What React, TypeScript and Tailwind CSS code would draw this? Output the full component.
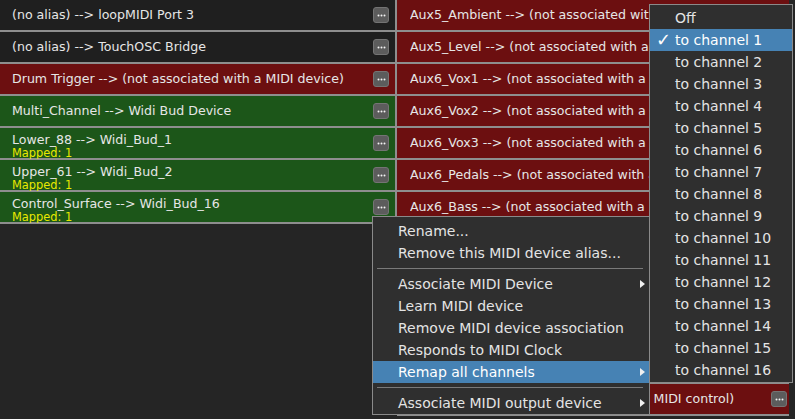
import React from "react";

type Tone = "dark" | "red" | "green";
type Row = { label: string; tone: Tone; mapped?: string };

const toneBg: Record<Tone, string> = {
  dark: "bg-[#1f1f1f]",
  red: "bg-[#6c0f10]",
  green: "bg-[#1c5619]",
};

const leftRows: Row[] = [
  { label: "(no alias) --> loopMIDI Port 3", tone: "dark" },
  { label: "(no alias) --> TouchOSC Bridge", tone: "dark" },
  { label: "Drum Trigger --> (not associated with a MIDI device)", tone: "red" },
  { label: "Multi_Channel --> Widi Bud Device", tone: "green" },
  { label: "Lower_88 --> Widi_Bud_1", tone: "green", mapped: "Mapped: 1" },
  { label: "Upper_61 --> Widi_Bud_2", tone: "green", mapped: "Mapped: 1" },
  { label: "Control_Surface --> Widi_Bud_16", tone: "green", mapped: "Mapped: 1" },
];

const rightRows: Row[] = [
  { label: "Aux5_Ambient --> (not associated with a MIDI device)", tone: "red" },
  { label: "Aux5_Level --> (not associated with a MIDI device)", tone: "red" },
  { label: "Aux6_Vox1 --> (not associated with a MIDI device)", tone: "red" },
  { label: "Aux6_Vox2 --> (not associated with a MIDI device)", tone: "red" },
  { label: "Aux6_Vox3 --> (not associated with a MIDI device)", tone: "red" },
  { label: "Aux6_Pedals --> (not associated with a MIDI device)", tone: "red" },
  { label: "Aux6_Bass --> (not associated with a MIDI device)", tone: "red" },
  { label: "Aux6_Keys --> (not associated with a MIDI device)", tone: "red" },
  { label: "Aux7_Vox1 --> (not associated with a MIDI device)", tone: "red" },
  { label: "Aux7_Vox2 --> (not associated with a MIDI device)", tone: "red" },
  { label: "Aux7_Pedals --> (not associated with a MIDI device)", tone: "red" },
  { label: "Aux7_Bass --> (not associated with a MIDI device)", tone: "red" },
  { label: "Aux7_Clock --> (not associated with a MIDI control)", tone: "red" },
];

type MenuEntry = { label: string; sub?: boolean; active?: boolean } | "sep";

const contextMenu: MenuEntry[] = [
  { label: "Rename..." },
  { label: "Remove this MIDI device alias..." },
  "sep",
  { label: "Associate MIDI Device", sub: true },
  { label: "Learn MIDI device" },
  { label: "Remove MIDI device association" },
  { label: "Responds to MIDI Clock" },
  { label: "Remap all channels", sub: true, active: true },
  "sep",
  { label: "Associate MIDI output device", sub: true },
];

const channels = ["Off", ...Array.from({ length: 16 }, (_, i) => `to channel ${i + 1}`)];

function DotsButton() {
  return (
    <div className="w-4 h-4 shrink-0 rounded-[3px] bg-[#5c5c5c] border border-[#747474] flex items-center justify-center">
      <svg width="9" height="3" viewBox="0 0 9 3">
        <circle cx="1.5" cy="1.5" r="1" fill="#f4f4f4" />
        <circle cx="4.5" cy="1.5" r="1" fill="#f4f4f4" />
        <circle cx="7.5" cy="1.5" r="1" fill="#f4f4f4" />
      </svg>
    </div>
  );
}

function Arrow() {
  return (
    <svg width="5" height="8" viewBox="0 0 5 8" className="shrink-0">
      <path d="M0 0 L5 4 L0 8 Z" fill="#f0f0f0" />
    </svg>
  );
}

function Cell({ row, side }: { row: Row; side: "left" | "right" }) {
  const pad = side === "left" ? "pl-3 pr-[6px] border-r-2" : "pl-[13px] pr-[2px]";
  return (
    <div className={`h-8 shrink-0 flex items-center border-b-2 border-[#8e8e8e] ${pad} ${toneBg[row.tone]}`}>
      {row.mapped ? (
        <div className="flex-1 min-w-0 self-start pt-[4px] flex flex-col overflow-hidden whitespace-nowrap">
          <span className="text-[12.6px] leading-[15px] text-[#e6e6e6]">{row.label}</span>
          <span className="text-[11.4px] leading-[12px] text-[#e8e800]">{row.mapped}</span>
        </div>
      ) : (
        <div className="flex-1 min-w-0 overflow-hidden whitespace-nowrap text-[12.6px] text-[#e6e6e6]">
          {row.label}
        </div>
      )}
      <DotsButton />
    </div>
  );
}

export default function App() {
  return (
    <div className="relative w-[795px] h-[419px] overflow-hidden bg-[#252525] font-['DejaVu_Sans',sans-serif] flex">
      <div className="w-[397px] flex flex-col">
        {leftRows.map((r) => (
          <Cell key={r.label} row={r} side="left" />
        ))}
      </div>
      <div className="w-[392px] flex flex-col">
        {rightRows.map((r) => (
          <Cell key={r.label} row={r} side="right" />
        ))}
      </div>

      {/* context menu */}
      <div className="absolute left-[372px] top-[216px] w-[278px] bg-[#2f2f2f] border border-[#8a8a8a] pt-[3px] text-[14px] text-[#e4e4e4]">
        {contextMenu.map((m, i) =>
          m === "sep" ? (
            <div key={i} className="h-[9px] flex items-center ml-[4px] mr-[6px]">
              <div className="h-px w-full bg-[#7a7a7a]" />
            </div>
          ) : (
            <div
              key={i}
              className={`h-[22px] flex items-center justify-between pl-[25px] pr-[4px] whitespace-nowrap ${m.active ? "bg-[#4682b4] text-white" : ""}`}
            >
              <span>{m.label}</span>
              {m.sub && <Arrow />}
            </div>
          )
        )}
      </div>

      {/* channel submenu */}
      <div className="absolute left-[649px] top-[4px] w-[144px] bg-[#2f2f2f] border border-[#8a8a8a] pt-[2px] pb-[1px] text-[14px] text-[#e4e4e4]">
        {channels.map((c, i) => (
          <div key={c} className={`h-[22px] flex items-center whitespace-nowrap ${i === 1 ? "bg-[#4682b4] text-white" : ""}`}>
            <span className="w-[25px] pl-[6px] font-bold text-[18px] leading-none">{i === 1 ? "✓" : ""}</span>
            <span>{c}</span>
          </div>
        ))}
      </div>
    </div>
  );
}
